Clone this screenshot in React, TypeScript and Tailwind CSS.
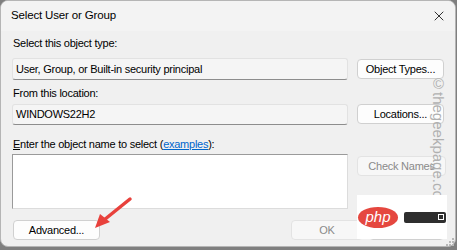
import { X } from "lucide-react";

const font = { fontFamily: '"Liberation Sans", Arial, sans-serif' };

function Btn({ children, w, disabled, className = "" }: { children: React.ReactNode; w: string; disabled?: boolean; className?: string }) {
  return (
    <div
      className={`${w} h-[20px] shrink-0 rounded-[4px] border flex items-center justify-center text-[11px] tracking-[-0.25px] whitespace-nowrap overflow-hidden ${
        disabled ? "border-[#e3e3e3] bg-[#f7f7f7] text-[#8a8a8a]" : "border-[#d0d0d0] bg-[#fdfdfd] text-black"
      } ${className}`}
    >
      {children}
    </div>
  );
}

function ReadField({ text, h }: { text: string; h: string }) {
  return (
    <div className={`w-[336px] ${h} border border-[#e2e2e2] border-b-[#8d8d8d] rounded-[3px] bg-[#f5f5f5] flex items-center pl-[3px] text-[11px] text-black`}>
      {text}
    </div>
  );
}

export default function App() {
  return (
    <div className="w-[457px] h-[250px] bg-[#7f7f7f] relative overflow-hidden" style={font}>
      <div className="w-[456px] h-[247px] rounded-[8px] border border-[#b5b5b5] bg-[#f0f0f0] overflow-hidden flex flex-col">
        {/* title bar */}
        <div className="h-[30px] shrink-0 bg-[#f3f3f3] flex items-center justify-between pl-[10px] pr-[8px] text-[11.5px] tracking-[-0.15px] text-black">
          <span>Select User or Group</span>
          <X size={16} strokeWidth={1.2} className="text-black" />
        </div>

        <div className="flex flex-col px-[11px] text-[11px] tracking-[-0.25px] text-black">
          <div className="mt-[4px] h-[16px] leading-[16px] pl-[1px]">Select this object type:</div>
          <div className="mt-[7px] flex justify-between items-start">
            <ReadField text="User, Group, or Built-in security principal" h="h-[22px]" />
            <Btn w="w-[87px]" className="mt-[1px]">Object Types...</Btn>
          </div>

          <div className="mt-[5px] h-[16px] leading-[16px] pl-[1px]">From this location:</div>
          <div className="mt-[3px] flex justify-between items-start">
            <ReadField text="WINDOWS22H2" h="h-[21px]" />
            <Btn w="w-[87px]">Locations...</Btn>
          </div>

          <div className="mt-[11px] h-[16px] leading-[16px] pl-[1px]">
            <span className="underline">E</span>nter the object name to select (
            <span className="text-[#0066cc] underline">examples</span>):
          </div>
          <div className="mt-[2px] flex justify-between items-start">
            <div className="w-[336px] h-[55px] bg-white border border-[#9a9a9a] border-r-[#dcdcdc] border-b-[#dcdcdc]" />
            <Btn w="w-[89px]" disabled className="mt-[2px] h-[19px] mr-[-2px]">Check Names</Btn>
          </div>

          <div className="mt-[11px] flex items-start">
            <Btn w="w-[87px]" className="ml-[1px] h-[19px]">Advanced...</Btn>
            <Btn w="w-[72px]" disabled className="ml-[191px] h-[19px]">OK</Btn>
            <Btn w="w-[75px]" className="ml-[6px] h-[19px]">Cancel</Btn>
          </div>
        </div>
      </div>

      {/* resize grip */}
      <svg className="absolute left-[444px] top-[236px]" width="10" height="10" viewBox="0 0 10 10">
        {[
          [8, 2], [5, 5], [8, 5], [2, 8], [5, 8], [8, 8],
        ].map(([x, y], i) => (
          <rect key={i} x={x} y={y} width="2" height="2" fill="#b8b8b8" />
        ))}
      </svg>

      {/* vertical watermark */}
      <div
        className="absolute left-[429px] top-[75px] text-[15px] leading-[18px] text-[#b0b0b0] whitespace-nowrap"
        style={{ writingMode: "vertical-rl" }}
      >
        ©thegeekpage.com
      </div>

      {/* php watermark */}
      <div className="absolute left-[357px] top-[195px] w-[90px] h-[44px] bg-white flex items-center pl-[1px] gap-[6px]">
        <div className="w-[40px] h-[21px] rounded-[50%] bg-[#e5473f] flex items-center justify-center">
          <span className="text-white italic text-[15px] leading-none -mt-[2px]">php</span>
        </div>
        <div className="w-[42px] h-[11px] rounded-[2px] bg-[#2e2e2e] flex items-center justify-end pr-[2px]">
          <div className="w-[6px] h-[6px] border border-white" />
        </div>
      </div>

      {/* red arrow */}
      <svg className="absolute left-0 top-0" width="457" height="250" viewBox="0 0 457 250">
        <line x1="130" y1="199" x2="104" y2="220" stroke="#e8413c" strokeWidth="3.5" strokeLinecap="round" />
        <polygon points="95,228 100,214 110,222" fill="#e8413c" />
      </svg>
    </div>
  );
}
